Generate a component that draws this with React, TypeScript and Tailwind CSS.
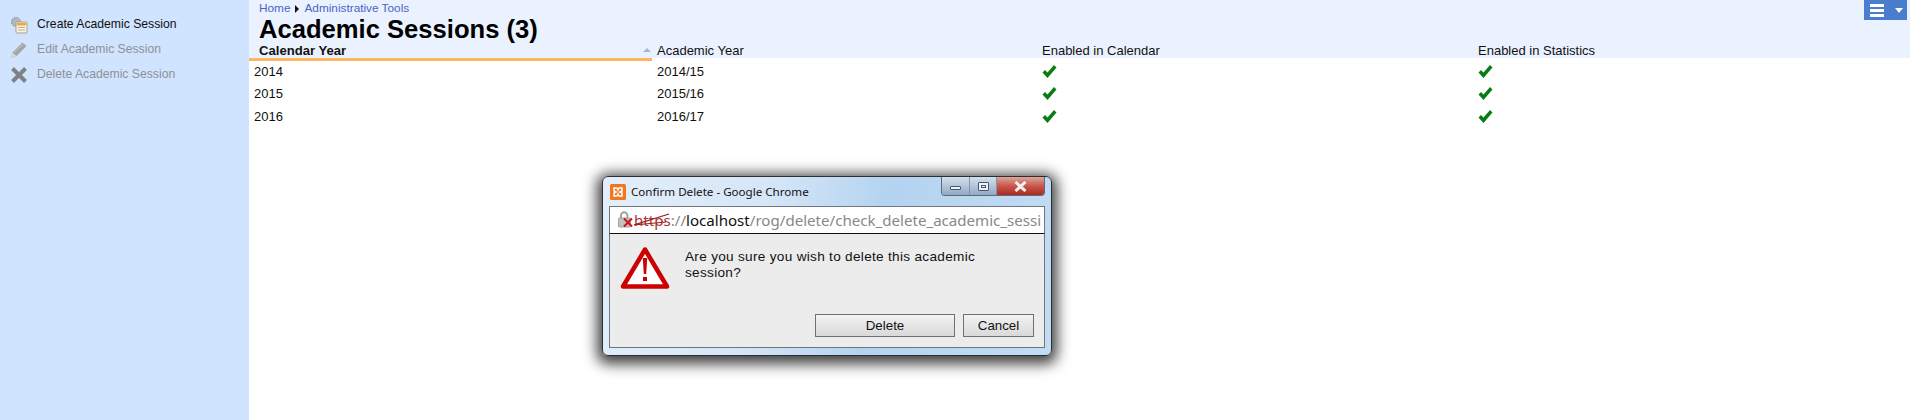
const rows = [
  { year: "2014", academic: "2014/15" },
  { year: "2015", academic: "2015/16" },
  { year: "2016", academic: "2016/17" },
];

const Check = () => (
  <svg width="15" height="15" viewBox="0 0 15 15" className="block">
    <path d="M0.5 8.5 L3 6 L5.5 8.5 L12 1 L14.5 3.5 L5.5 14 Z" fill="#0a7d12" />
  </svg>
);

const SideItem = ({ icon, label, muted }: { icon: React.ReactNode; label: string; muted?: boolean }) => (
  <div className="flex h-[25px] items-center">
    <div className="flex w-[36px] justify-center">{icon}</div>
    <span className={muted ? "text-[12.2px] text-[#8e9196]" : "text-[12.2px] text-[#111]"}>{label}</span>
  </div>
);

const Dialog = () => (
  <div className="absolute left-[602px] top-[176px] h-[180px] w-[450px] rounded-[6px] border border-[#2a2f36] bg-[linear-gradient(100deg,#e3eefa_0%,#d6e6f7_35%,#b4d3f0_60%,#c3dcf4_100%)] px-[6px] shadow-[0_3px_14px_5px_rgba(0,0,0,0.75)]">
    <div className="flex h-[29px] items-center pl-[1px]">
      <svg width="16" height="16" viewBox="0 0 16 16" className="mt-[1px]">
        <rect width="16" height="16" rx="1.5" fill="#f0761f" />
        <path d="M4 4 L7 4 L8 6 L9 4 L12 4 L12 7 L10 8 L12 9 L12 12 L9 12 L8 10 L7 12 L4 12 L4 9 L6 8 L4 7 Z" fill="none" stroke="#fff" strokeWidth="1.5" />
      </svg>
      <span className="ml-[5px] font-['Noto_Sans',sans-serif] text-[11.6px] text-[#111]">Confirm Delete - Google Chrome</span>
      <div className="ml-auto flex h-[19px] items-center self-start overflow-hidden rounded-b-[4px] border border-t-0 border-[#5b6b7d]">
        <div className="flex h-full w-[28px] items-center justify-center border-r border-[#8496a8] bg-[linear-gradient(#d3e0ee,#b4c6d9_50%,#8fa9c4)]">
          <div className="mt-[3px] h-[4px] w-[11px] rounded-[1px] border border-[#47566a] bg-[#eef3f8]" />
        </div>
        <div className="flex h-full w-[27px] items-center justify-center border-r border-[#8496a8] bg-[linear-gradient(#d3e0ee,#b4c6d9_50%,#8fa9c4)]">
          <div className="flex h-[9px] w-[11px] items-center justify-center rounded-[1px] border border-[#47566a] bg-[#eef3f8]">
            <div className="h-[3px] w-[5px] border border-[#47566a]" />
          </div>
        </div>
        <div className="flex h-full w-[47px] items-center justify-center bg-[linear-gradient(#dfa59a,#c8574b_50%,#a92c20)]">
          <svg width="13" height="11" viewBox="0 0 13 11">
            <path d="M1.5 1 L11.5 10 M11.5 1 L1.5 10" stroke="#f4f1ee" strokeWidth="3" />
          </svg>
        </div>
      </div>
    </div>
    <div className="flex h-[28px] items-center border border-[#70767d] border-b-[#111] bg-white pl-[7px]">
      <svg width="16" height="18" viewBox="0 0 16 18" className="shrink-0">
        <path d="M4 7 V4.5 a3.2 3.2 0 0 1 6.4 0 V7" fill="none" stroke="#a2a2a2" strokeWidth="2" />
        <rect x="1.5" y="7" width="12" height="9" rx="1" fill="#c2c2c2" stroke="#a2a2a2" />
        <path d="M7 7.5 L15 15.5 M15 7.5 L7 15.5" stroke="#c4161c" strokeWidth="2" />
      </svg>
      <div className="ml-[1px] overflow-hidden whitespace-nowrap font-['Noto_Sans',sans-serif] text-[15.1px]">
        <span className="relative text-[#a6363a]">
          https
          <svg width="38" height="14" viewBox="0 0 38 14" className="absolute -left-[1px] top-[3px]">
            <path d="M1 12 L36 1 M1 12 L33 9" stroke="#a01c1c" strokeWidth="1.2" fill="none" />
          </svg>
        </span>
        <span className="text-[#888]">://</span>
        <span className="text-[#111]">localhost</span>
        <span className="text-[#888]">/rog/delete/check_delete_academic_sessi</span>
      </div>
    </div>
    <div className="h-[114px] border border-t-0 border-[#70767d] bg-[#ececec]">
      <div className="flex pl-[10px] pt-[12px]">
        <svg width="50" height="44" viewBox="0 0 50 44" className="shrink-0">
          <path d="M25 3.5 L47 40.5 H3 Z" fill="#fff" stroke="#cc0000" strokeWidth="4.5" strokeLinejoin="round" />
          <path d="M22.8 12 H27.2 L26.2 28 H23.8 Z" fill="#cc0000" />
          <rect x="23" y="31" width="4" height="4" fill="#cc0000" />
        </svg>
        <p className="ml-[15px] w-[320px] pt-[3px] font-['Liberation_Sans',sans-serif] text-[13.6px] leading-[16px] tracking-[0.3px] text-[#111]">
          Are you sure you wish to delete this academic session?
        </p>
      </div>
      <div className="mt-[24px] flex justify-end gap-[8px] pr-[10px] font-['Liberation_Sans',sans-serif] text-[13.33px] text-[#111]">
        <button className="h-[23px] w-[140px] border border-[#707070] bg-[linear-gradient(#f2f2f2,#d9d9d9)]">Delete</button>
        <button className="h-[23px] w-[71px] border border-[#707070] bg-[linear-gradient(#f2f2f2,#d9d9d9)]">Cancel</button>
      </div>
    </div>
  </div>
);

export default function App() {
  return (
    <div className="relative flex h-[420px] w-[1910px] overflow-hidden bg-white font-['Liberation_Sans',sans-serif] text-[13px] text-[#111]">
      <aside className="w-[249px] shrink-0 bg-[#d0e3ff] pl-[1px] pt-[12px]">
        <SideItem
          label="Create Academic Session"
          icon={
            <svg width="18" height="18" viewBox="0 0 18 18">
              <circle cx="6" cy="6" r="4.5" fill="#b4b7ba" stroke="#8b8e92" strokeDasharray="2 1" />
              <rect x="6" y="6" width="11" height="11" rx="1" fill="#fbf3dd" stroke="#a59f90" />
              <rect x="7" y="7" width="9" height="2.5" fill="#f0a642" />
              <path d="M8 11.5 H15 M8 14 H15" stroke="#b8b09a" />
            </svg>
          }
        />
        <SideItem
          muted
          label="Edit Academic Session"
          icon={
            <svg width="18" height="18" viewBox="0 0 18 18">
              <path d="M1 17 L2.5 11.5 L12.5 1.5 L16.5 5 L6.5 15 Z" fill="#a3a4a6" />
              <path d="M1 17 L2.5 11.5 L6.5 15 Z" fill="#d6d6d6" />
              <path d="M4 11.5 L13.5 3" stroke="#c9c9c9" />
            </svg>
          }
        />
        <SideItem
          muted
          label="Delete Academic Session"
          icon={
            <svg width="16" height="16" viewBox="0 0 16 16">
              <path d="M1.5 1.5 L14.5 14.5 M14.5 1.5 L1.5 14.5" stroke="#7f8285" strokeWidth="4" />
            </svg>
          }
        />
      </aside>
      <main className="min-w-0 flex-1">
        <div className="relative h-[49px] bg-[#ebf2ff] pl-[10px]">
          <div className="flex h-[16px] items-center pt-[1px] text-[11.8px] text-[#4a63c4]">
            <span>Home</span>
            <span className="mx-[5px] h-0 w-0 border-y-[4px] border-l-[4px] border-y-transparent border-l-[#111]" />
            <span>Administrative Tools</span>
          </div>
          <h1 className="-mt-[2px] text-[25.6px] font-bold leading-[31px] text-black">Academic Sessions (3)</h1>
          <div className="absolute right-[3px] top-0 flex h-[20px] w-[43px] items-center bg-[#4a7dcd] pl-[6px]">
            <div className="flex w-[14px] flex-col gap-[2px]">
              <div className="h-[3px] bg-white" />
              <div className="h-[3px] bg-white" />
              <div className="h-[3px] bg-white" />
            </div>
            <div className="ml-[11px] h-0 w-0 border-x-[4px] border-t-[5px] border-x-transparent border-t-white" />
          </div>
        </div>
        <div className="grid grid-cols-[403px_385px_436px_1fr]">
          <div className="relative h-[12px] overflow-visible border-b-[3px] border-[#ffb55f] bg-[#ebf2ff] pl-[10px] font-bold">
            <span className="absolute left-[10px] top-[-6px] text-[13.1px] leading-[15px]">Calendar Year</span>
            <span className="absolute right-[1px] top-[-1px] h-0 w-0 border-x-[4px] border-b-[4px] border-x-transparent border-b-[#9dbcdc]" />
          </div>
          {["Academic Year", "Enabled in Calendar", "Enabled in Statistics"].map((h) => (
            <div key={h} className="relative h-[9px] bg-[#ebf2ff]">
              <span className="absolute left-[5px] top-[-6px] leading-[15px]">{h}</span>
            </div>
          ))}
          {rows.map((r, i) => (
            <div key={r.year} className="contents">
              <div className={i === 0 ? "-mt-[1px] flex h-[22.5px] items-center pl-[5px]" : "flex h-[22.5px] items-center pl-[5px]"}>{r.year}</div>
              <div className={i === 0 ? "-mt-[1px] flex h-[22.5px] items-center pl-[5px]" : "flex h-[22.5px] items-center pl-[5px]"}>{r.academic}</div>
              <div className={i === 0 ? "-mt-[1px] flex h-[22.5px] items-center pl-[5px]" : "flex h-[22.5px] items-center pl-[5px]"}><Check /></div>
              <div className={i === 0 ? "-mt-[1px] flex h-[22.5px] items-center pl-[5px]" : "flex h-[22.5px] items-center pl-[5px]"}><Check /></div>
            </div>
          ))}
        </div>
      </main>
      <Dialog />
    </div>
  );
}
